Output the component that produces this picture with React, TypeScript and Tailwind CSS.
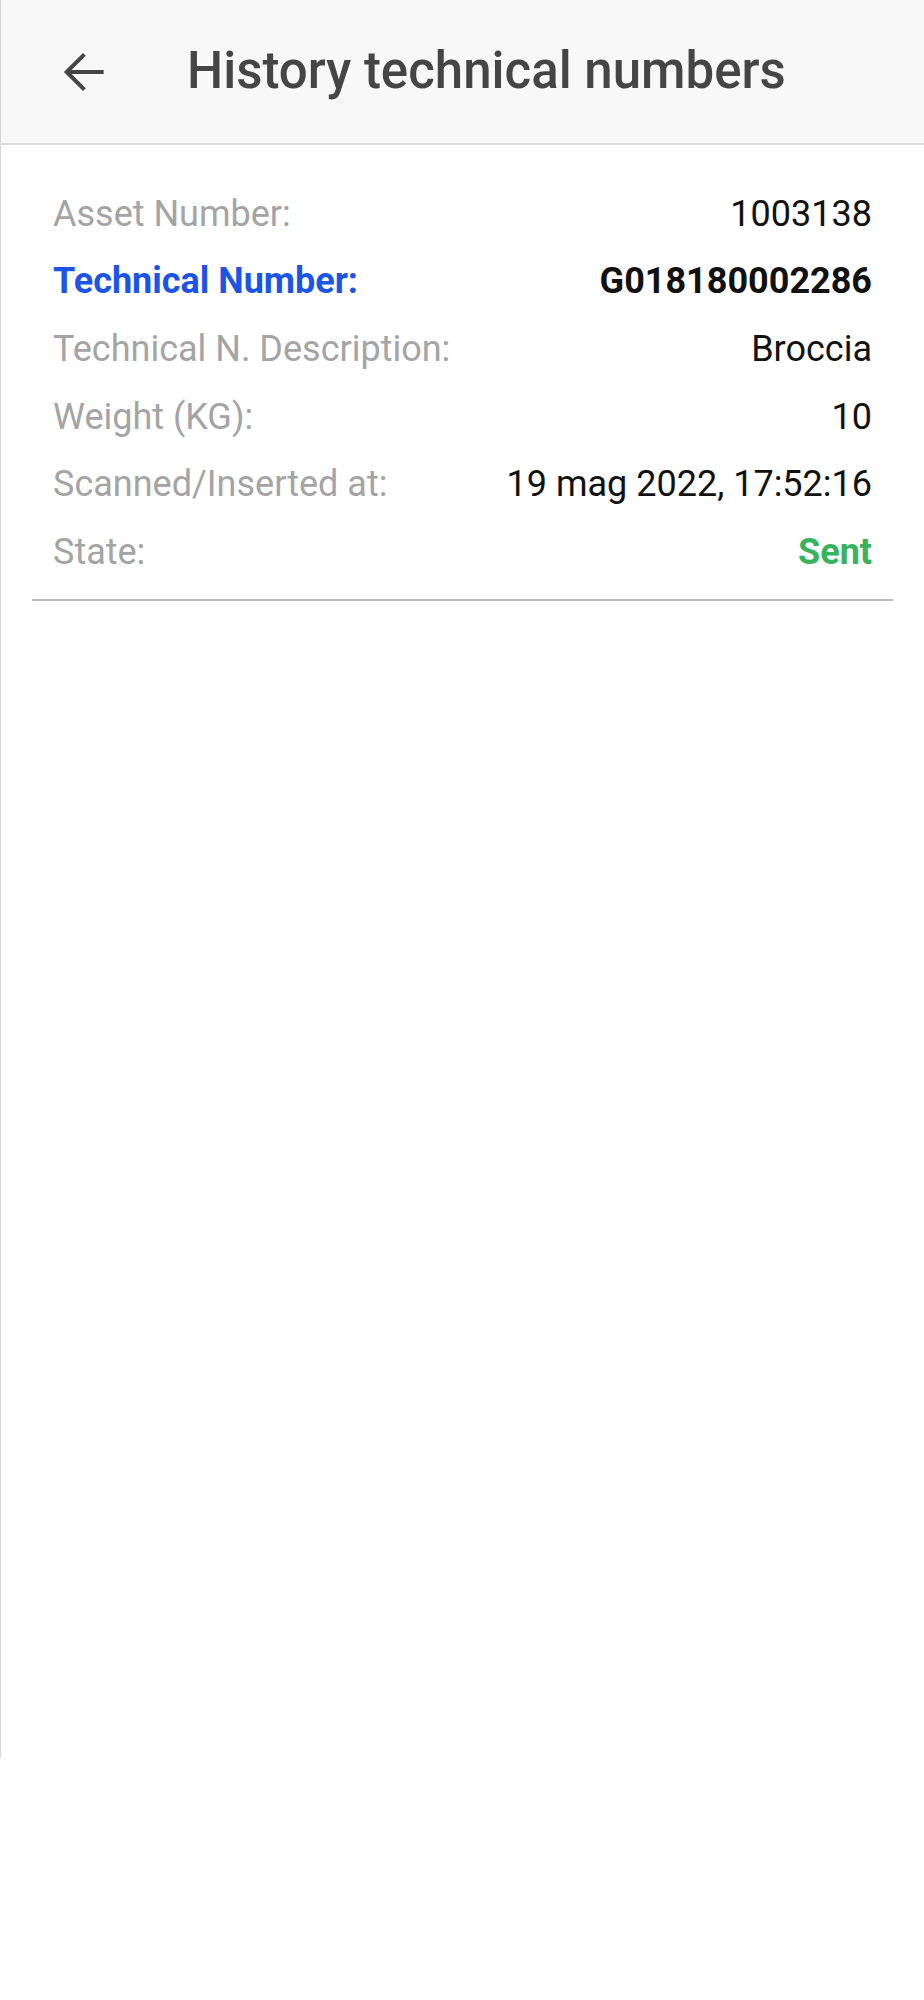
const rows = [
  { label: "Asset Number:", value: "1003138" },
  { label: "Technical Number:", value: "G018180002286", highlight: true },
  { label: "Technical N. Description:", value: "Broccia" },
  { label: "Weight (KG):", value: "10" },
  { label: "Scanned/Inserted at:", value: "19 mag 2022, 17:52:16" },
  { label: "State:", value: "Sent", state: true },
];

export default function App() {
  return (
    <div className="w-[924px] h-[2000px] bg-white font-['Roboto',sans-serif]">
      <div className="h-[1758px] border-l border-[#d6d6d6]">
        {/* header */}
        <header className="h-[145px] bg-[#f8f8f8] border-b-2 border-[#dcdcdc] flex items-center">
          <button className="ml-[51px] w-[62px] h-[62px] flex items-center justify-center text-[#454545]">
            <svg width="62" height="62" viewBox="0 0 24 24" fill="currentColor">
              <path d="M20 11.2H7.6l5.5-5.5L12 4.6 4.6 12l7.4 7.4 1.1-1.1-5.5-5.5H20v-1.6z" />
            </svg>
          </button>
          <h1 className="ml-[73px] text-[51px] font-medium text-[#454545]">
            History technical numbers
          </h1>
        </header>

        {/* detail card */}
        <div className="mx-[31px] pt-[35px]">
          <div className="px-[21px] flex flex-col">
            {rows.map((r) => (
              <div key={r.label} className="h-[67.6px] flex items-center justify-between text-[36px]">
                <span
                  className={
                    r.highlight ? "font-bold text-[#1b54e6]" : "text-[#a4a4a4]"
                  }
                >
                  {r.label}
                </span>
                <span
                  className={
                    r.highlight
                      ? "font-bold text-[#111]"
                      : r.state
                      ? "font-bold text-[#37b35b]"
                      : "text-[#111]"
                  }
                >
                  {r.value}
                </span>
              </div>
            ))}
          </div>
          <div className="mt-[13px] h-[2px] bg-[#bdbdbd]" />
        </div>
      </div>
    </div>
  );
}
